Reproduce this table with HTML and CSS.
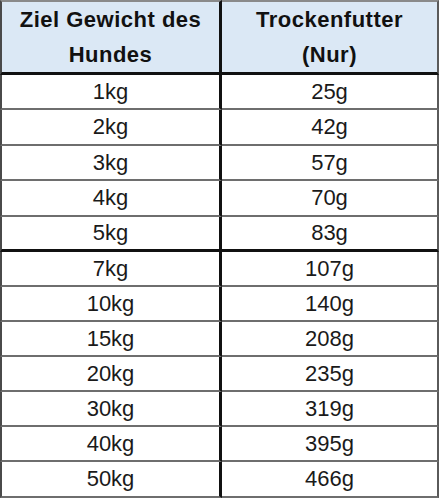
FILE: index.html
```html
<!DOCTYPE html>
<html lang="de">
<head>
<meta charset="utf-8">
<title>Futtertabelle</title>
<link rel="stylesheet" href="styles.css">
</head>
<body>
<table class="feed">
  <thead>
    <tr class="head">
      <th class="c1">Ziel Gewicht des<br>Hundes</th>
      <th class="c2">Trockenfutter<br>(Nur)</th>
    </tr>
  </thead>
  <tbody>
    <tr class="r35"><td class="c1">1kg</td><td class="c2">25g</td></tr>
    <tr class="r36"><td class="c1">2kg</td><td class="c2">42g</td></tr>
    <tr class="r35"><td class="c1">3kg</td><td class="c2">57g</td></tr>
    <tr class="r36"><td class="c1">4kg</td><td class="c2">70g</td></tr>
    <tr class="r35 sep"><td class="c1">5kg</td><td class="c2">83g</td></tr>
    <tr class="r35"><td class="c1">7kg</td><td class="c2">107g</td></tr>
    <tr class="r35"><td class="c1">10kg</td><td class="c2">140g</td></tr>
    <tr class="r35"><td class="c1">15kg</td><td class="c2">208g</td></tr>
    <tr class="r35"><td class="c1">20kg</td><td class="c2">235g</td></tr>
    <tr class="r35"><td class="c1">30kg</td><td class="c2">319g</td></tr>
    <tr class="r35"><td class="c1">40kg</td><td class="c2">395g</td></tr>
    <tr class="r36"><td class="c1">50kg</td><td class="c2">466g</td></tr>
  </tbody>
</table>
</body>
</html>
```
FILE: styles.css
```css
html, body {
  margin: 0;
  padding: 0;
  background: #ffffff;
}

.feed {
  border-collapse: separate;
  border-spacing: 0;
  width: 439px;
  table-layout: fixed;
  font-family: "Liberation Sans", Arial, sans-serif;
  color: #1a1a1a;
}

.feed th,
.feed td {
  box-sizing: border-box;
  padding: 0;
  text-align: center;
  vertical-align: middle;
  border-bottom: 2px solid #6e6e6e;
}

.feed .c1 {
  width: 222px;
  border-left: 2px solid #4a4a4a;
  border-right: 3px solid #111111;
}

.feed .c2 {
  border-right: 2px solid #5a5a5a;
}

.head th {
  height: 73px;
  background: #dbe8f5;
  border-top: 2px solid #8a8a8a;
  border-bottom: 3px solid #111111;
  font-weight: bold;
  font-size: 22px;
  letter-spacing: 0.5px;
  line-height: 35px;
  color: #111111;
}

.feed td {
  font-size: 22px;
  line-height: 24px;
}

.r35 td { height: 35px; }
.r36 td { height: 36px; }

.sep td {
  border-bottom: 3px solid #111111;
}
```
